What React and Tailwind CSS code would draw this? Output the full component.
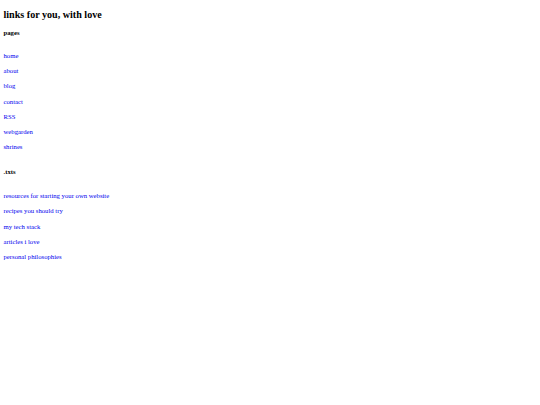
import React from "react";

const pages = ["home", "about", "blog", "contact", "RSS", "webgarden", "shrines"];

const txts = [
  "resources for starting your own website",
  "recipes you should try",
  "my tech stack",
  "articles i love",
  "personal philosophies",
];

/* ── link list ─────────────────────────────────────────────────────────── */
const LinkList = ({ items }) => (
  <div className="flex flex-col gap-[7.2px]">
    {items.map((item) => (
      <a
        key={item}
        href="#"
        className="block text-[6.7px] leading-[8px] text-[#0000ee] no-underline"
      >
        {item}
      </a>
    ))}
  </div>
);

/* ── App ───────────────────────────────────────────────────────────────── */
const App = () => {
  return (
    <div
      className="min-h-[405px] w-full bg-white px-[3.5px] pt-[8.5px] text-black"
      style={{ fontFamily: '"Liberation Serif", "Times New Roman", serif' }}
    >
      <h2 className="text-[10.1px] font-bold leading-[12px]">
        links for you, with love
      </h2>

      <h4 className="mt-[8px] text-[6.7px] font-bold leading-[8px]">pages</h4>
      <div className="mt-[15.5px]">
        <LinkList items={pages} />
      </div>

      <h4 className="mt-[17px] text-[6.7px] font-bold leading-[8px]">.txts</h4>
      <div className="mt-[16px]">
        <LinkList items={txts} />
      </div>
    </div>
  );
};

export default App;
